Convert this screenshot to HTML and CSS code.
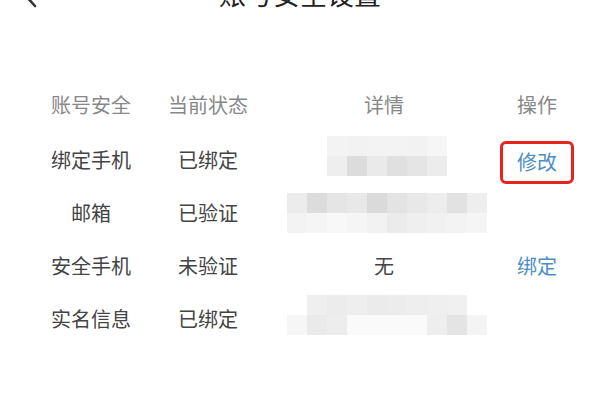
FILE: index.html
```html
<!DOCTYPE html>
<html lang="zh-CN">
<head>
<meta charset="utf-8">
<title>账号安全设置</title>
<link rel="stylesheet" href="styles.css">
</head>
<body>
<div class="navbar">
  <div class="back">
    <svg width="16" height="30" viewBox="0 0 16 30"><polyline points="13,5 3,16 13,27" fill="none" stroke="#333" stroke-width="2.6" stroke-linecap="round" stroke-linejoin="round"/></svg>
  </div>
  <div class="title">账号安全设置</div>
  <div></div>
</div>

<div class="table">
  <div class="cell head">账号安全</div>
  <div class="cell head">当前状态</div>
  <div class="cell head">详情</div>
  <div class="cell head">操作</div>

  <div class="cell">绑定手机</div>
  <div class="cell">已绑定</div>
  <div class="cell">
    <div class="mosaic mosaic-6 up">
      <span style="background:#f3f3f3"></span><span style="background:#f2f2f2"></span><span style="background:#f3f3f3"></span><span style="background:#f3f3f3"></span><span style="background:#f2f2f2"></span><span style="background:#f6f6f6"></span>
      <span style="background:#eeeeee"></span><span style="background:#dcdcdc"></span><span style="background:#eaeaea"></span><span style="background:#e0e0e0"></span><span style="background:#e5e5e5"></span><span style="background:#ececec"></span>
    </div>
  </div>
  <div class="cell"><span class="action boxed">修改</span></div>

  <div class="cell">邮箱</div>
  <div class="cell">已验证</div>
  <div class="cell">
    <div class="mosaic mosaic-10">
      <span style="background:#ececec"></span><span style="background:#dcdcdc"></span><span style="background:#e5e5e5"></span><span style="background:#e8e8e8"></span><span style="background:#dadada"></span><span style="background:#e3e3e3"></span><span style="background:#e8e8e8"></span><span style="background:#ededed"></span><span style="background:#e2e2e2"></span><span style="background:#eeeeee"></span>
      <span style="background:#f3f3f3"></span><span style="background:#f5f5f5"></span><span style="background:#f8f8f8"></span><span style="background:#f5f5f5"></span><span style="background:#f2f2f2"></span><span style="background:#ebebeb"></span><span style="background:#efefef"></span><span style="background:#f1f1f1"></span><span style="background:#f3f3f3"></span><span style="background:#f5f5f5"></span>
    </div>
  </div>
  <div class="cell"></div>

  <div class="cell">安全手机</div>
  <div class="cell">未验证</div>
  <div class="cell">无</div>
  <div class="cell"><span class="action">绑定</span></div>

  <div class="cell">实名信息</div>
  <div class="cell">已绑定</div>
  <div class="cell">
    <div class="mosaic mosaic-10 up">
      <span style="background:#ffffff"></span><span style="background:#efefef"></span><span style="background:#ececec"></span><span style="background:#eeeeee"></span><span style="background:#ebebeb"></span><span style="background:#ececec"></span><span style="background:#eeeeee"></span><span style="background:#efefef"></span><span style="background:#f0f0f0"></span><span style="background:#ffffff"></span>
      <span style="background:#f6f6f6"></span><span style="background:#eaeaea"></span><span style="background:#ededed"></span><span style="background:#fafafa"></span><span style="background:#fafafa"></span><span style="background:#fafafa"></span><span style="background:#fafafa"></span><span style="background:#eeeeee"></span><span style="background:#e4e4e4"></span><span style="background:#f4f4f4"></span>
    </div>
  </div>
  <div class="cell"></div>
</div>
</body>
</html>
```

FILE: styles.css
```css
html, body {
  margin: 0;
  padding: 0;
  background: #ffffff;
}

body {
  font-family: "Noto Sans CJK SC", "Noto Sans", sans-serif;
  color: #444444;
  width: 600px;
  height: 420px;
  overflow: hidden;
}

.navbar {
  display: grid;
  grid-template-columns: 60px 1fr 60px;
  align-items: center;
  height: 30px;
  margin-top: -21px;
}

.back {
  display: flex;
  align-items: center;
  padding-left: 22px;
  height: 30px;
}

.back svg {
  display: block;
}

.title {
  text-align: center;
  font-size: 27px;
  line-height: 30px;
  color: #222222;
}

.table {
  display: grid;
  grid-template-columns: 114px 120px 232px 74px;
  grid-template-rows: 56px repeat(4, 53px);
  margin-top: 68px;
  padding-left: 34px;
}

.cell {
  display: flex;
  align-items: center;
  justify-content: center;
  font-size: 20px;
  line-height: 28px;
  white-space: nowrap;
  color: #444444;
}

.cell.head {
  color: #888888;
}

.action {
  color: #4b8ec6;
  display: flex;
  align-items: center;
  justify-content: center;
  width: 74px;
  height: 43px;
  box-sizing: border-box;
}

.action.boxed {
  border: 3px solid #e8231e;
  border-radius: 6px;
  margin-top: 5px;
}

.mosaic {
  display: grid;
  grid-auto-rows: 20px;
}

.mosaic span {
  display: block;
}

.mosaic-6 {
  grid-template-columns: repeat(6, 20px);
  margin-left: 6px;
}

.mosaic-10 {
  grid-template-columns: repeat(10, 20px);
  margin-left: 6px;
}

.mosaic.up {
  margin-bottom: 8px;
}
```
